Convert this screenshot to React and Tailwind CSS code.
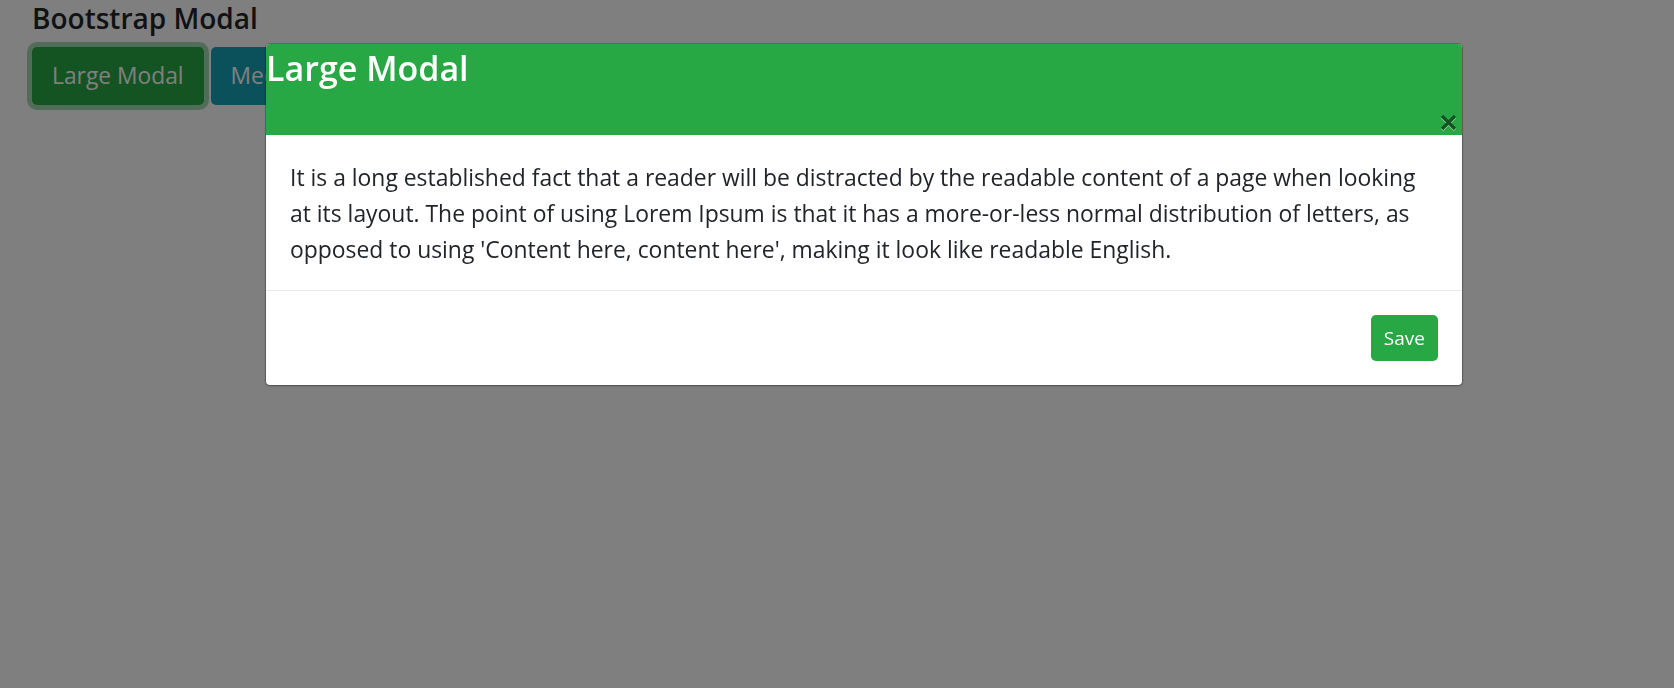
export default function App() {
  return (
    <div className="relative min-h-[688px] w-full bg-white font-['Open_Sans',sans-serif] text-[#212529]">
      <div className="px-8 pt-[2px]">
        <h3 className="text-[28px] font-semibold leading-[1.2] mb-[11px]">Bootstrap Modal</h3>
        <div className="flex gap-[7px]">
          <button className="h-[58px] px-[20px] rounded-[5px] bg-[#28a745] text-white text-[22.8px] ring-[5px] ring-[#48b461]/50">
            Large Modal
          </button>
          <button className="h-[58px] px-[20px] rounded-[5px] bg-[#17a2b8] text-white text-[22.8px]">
            Medium Modal
          </button>
          <button className="h-[58px] px-[20px] rounded-[5px] bg-[#dc3545] text-white text-[22.8px]">
            Small Modal
          </button>
        </div>
      </div>

      {/* backdrop */}
      <div className="fixed inset-0 bg-black/50" />

      {/* modal */}
      <div className="fixed inset-0 pt-[43px] pl-[265px]">
        <div className="w-[1198px] rounded-[5px] border border-black/20 bg-white bg-clip-padding overflow-hidden shadow-sm">
          <div className="flex h-[91px] justify-between bg-[#28a745]">
            <h4 className="text-[34px] font-semibold leading-[1.2] text-white pt-[4px]">Large Modal</h4>
            <button className="self-end mb-[3px] mr-[4px] opacity-50" aria-label="Close">
              <svg width="18" height="18" viewBox="0 0 18 18">
                <g stroke="#fff" strokeWidth="3.2" strokeLinecap="butt" transform="translate(0 1)">
                  <path d="M2 2 L15 15 M15 2 L2 15" />
                </g>
                <g stroke="#000" strokeWidth="3.2" strokeLinecap="butt">
                  <path d="M2 2 L15 15 M15 2 L2 15" />
                </g>
              </svg>
            </button>
          </div>
          <div className="px-6 pt-[25px] pb-[22px] text-[22.9px] leading-[36px]">
            <p>
              It is a long established fact that a reader will be distracted by the readable content of a page when looking
              <br />
              at its layout. The point of using Lorem Ipsum is that it has a more-or-less normal distribution of letters, as
              <br />
              opposed to using 'Content here, content here', making it look like readable English.
            </p>
          </div>
          <div className="flex justify-end border-t border-[#e9ecef] p-6">
            <button className="h-[46px] px-[13px] rounded-[5px] bg-[#28a745] text-white text-[19px]">Save</button>
          </div>
        </div>
      </div>
    </div>
  );
}
